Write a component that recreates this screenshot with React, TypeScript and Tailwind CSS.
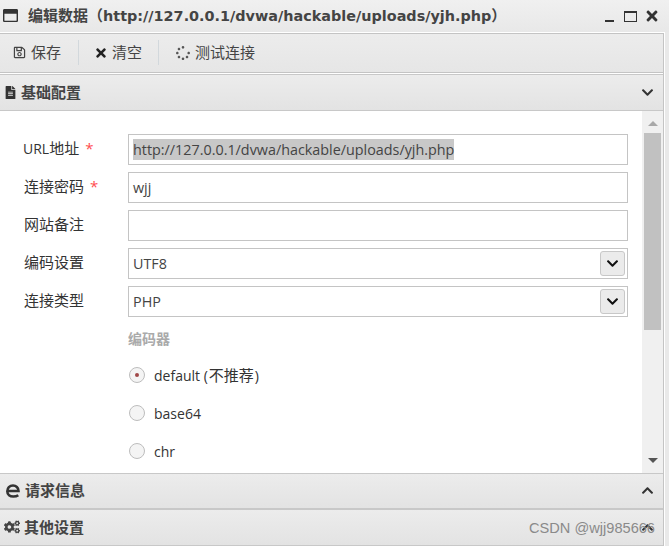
import { FaRegSave, FaTimes, FaSpinner, FaFileAlt, FaChevronDown, FaChevronUp, FaCogs, FaRegWindowMaximize } from "react-icons/fa";

const font = "font-['Open_Sans','Noto_Sans_CJK_SC',sans-serif]";

function Field({ label, required, children }: { label: React.ReactNode; required?: boolean; children: React.ReactNode }) {
  return (
    <div className="flex h-[31px]">
      <div className="w-[128px] pt-[3px] pl-6 text-[15px] leading-[22px] text-[#333]">
        {label}
        {required && <span className="ml-[6px] text-[#ff4d4f]">*</span>}
      </div>
      <div className="relative flex h-[31px] w-[500px] items-center border border-[#c4c4c4] bg-white pl-1 text-[14.35px] text-[#444]">
        {children}
      </div>
    </div>
  );
}

function SelectField({ label, value }: { label: string; value: string }) {
  return (
    <Field label={label}>
      {value}
      <span className="absolute top-[2px] right-[2px] flex h-[25px] w-[25px] items-center justify-center rounded-[3px] border border-[#c8c8c8] bg-[#ebebeb] text-[#111]">
        <FaChevronDown size={13} />
      </span>
    </Field>
  );
}

function Radio({ label, checked }: { label: React.ReactNode; checked?: boolean }) {
  return (
    <div className="flex h-[38px] items-center gap-[9px] pl-px text-[14px] text-[#333]">
      <span className="flex h-4 w-4 items-center justify-center rounded-full border border-[#bdbdbd] bg-[#f4f4f4]">
        {checked && <span className="h-1 w-1 rounded-full bg-[#a04848]" />}
      </span>
      <span>{label}</span>
    </div>
  );
}

function SectionBar({ icon, title, chevron }: { icon: React.ReactNode; title: string; chevron: React.ReactNode }) {
  return (
    <div className="flex h-full items-center justify-between bg-gradient-to-b from-[#ececec] to-[#e3e3e3] pr-[9px] pb-px pl-1 text-[15px] font-bold text-[#444]">
      <div className="flex items-center gap-1">
        {icon}
        {title}
      </div>
      <span className="text-[#333]">{chevron}</span>
    </div>
  );
}

function EdgeIcon() {
  return (
    <svg width="16" height="16" viewBox="0 0 16 16" fill="none" stroke="#333" strokeWidth="2.6" className="ml-px">
      <path d="M3 8h10.5C13.5 4.5 11 2.5 8 2.5 4.6 2.5 2.3 5 2.3 8.2c0 3.400 2.700 5.300 6 5.300 2 0 3.700-.4 5-1.300" />
    </svg>
  );
}

export default function App() {
  return (
    <div className={`relative flex h-[546px] w-[669px] flex-col overflow-hidden bg-[#e9e9e9] ${font}`}>
      {/* window title */}
      <div className="flex h-8 shrink-0 items-center justify-between bg-gradient-to-b from-[#f0f0f0] to-[#e8e8e8] pr-[9px] pl-[3px]">
        <div className="flex items-center gap-[10px] text-[15px] font-bold text-[#444]">
          <FaRegWindowMaximize size={15} className="text-[#333]" />
          <span>
            编辑数据（<span className="font-['DejaVu_Sans',sans-serif] text-[14.4px]">http://127.0.0.1/dvwa/hackable/uploads/yjh.php</span>）
          </span>
        </div>
        <div className="flex items-center text-[#333]">
          <span className="mt-[9px] mr-[10px] h-[2px] w-[9px] bg-[#333]" />
          <span className="mr-[7px] h-[11px] w-[13px] border border-t-[2px] border-[#333]" />
          <FaTimes size={16} />
        </div>
      </div>

      {/* panel */}
      <div className="h-[514px] w-[665px] border-t border-r border-white bg-white">
        <div className="flex h-full flex-col border-r border-[#c4c4c4]">
          <div className="flex h-[40px] shrink-0 items-center border-y border-[#c4c4c4] bg-gradient-to-b from-[#ececec] to-[#e6e6e6] pb-px text-[15px] text-[#444]">
            <button className="flex w-[78px] items-center gap-[5px] pl-[13px]">
              <FaRegSave size={13} />
              保存
            </button>
            <span className="h-[25px] w-px bg-[#d2d8dc]" />
            <button className="flex w-[79px] items-center gap-[4px] pl-[15px]">
              <FaTimes size={14} className="text-[#222]" />
              清空
            </button>
            <span className="h-[25px] w-px bg-[#d2d8dc]" />
            <button className="flex items-center gap-[5px] pl-[17px]">
              <FaSpinner size={14} className="text-[#555]" />
              测试连接
            </button>
          </div>

          <div className="mt-px h-[37px] shrink-0 border-y border-[#c8c8c8]">
            <SectionBar icon={<FaFileAlt size={13} className="text-[#333]" />} title="基础配置" chevron={<FaChevronDown size={13} />} />
          </div>

          {/* form */}
          <div className="flex min-h-0 flex-1 bg-white">
            <div className="min-w-0 flex-1 overflow-hidden">
              <div className="flex flex-col gap-[7px] pt-[23px]">
                <Field
                  label={
                    <span className="-ml-px">
                      <span className="text-[14px]">URL</span>地址
                    </span>
                  }
                  required
                >
                  <span className="bg-[#c8c8c8]">http://127.0.0.1/dvwa/hackable/uploads/yjh.php</span>
                </Field>
                <Field label="连接密码" required>
                  wjj
                </Field>
                <Field label="网站备注">{""}</Field>
                <SelectField label="编码设置" value="UTF8" />
                <SelectField label="连接类型" value="PHP" />
              </div>
              <div className="pt-[12px] pl-[128px]">
                <div className="mb-[7px] text-[14px] leading-5 font-bold text-[#aaa]">编码器</div>
                <Radio
                  label={
                    <>
                      default (<span className="px-px text-[15px]">不推荐</span>)
                    </>
                  }
                  checked
                />
                <Radio label="base64" />
                <Radio label="chr" />
              </div>
            </div>
            {/* scrollbar */}
            <div className="flex w-[21px] shrink-0 flex-col items-center bg-[#f0f0f0]">
              <span className="mt-[10px] h-0 w-0 border-x-[5px] border-b-[5px] border-x-transparent border-b-[#a8a8a8]" />
              <span className="mt-[7px] h-[197px] w-[17px] bg-[#c1c1c1]" />
              <span className="mt-[128px] h-0 w-0 border-x-[5px] border-t-[5px] border-x-transparent border-t-[#555]" />
            </div>
          </div>

          <div className="h-[35px] shrink-0 border-t border-[#c8c8c8]">
            <SectionBar icon={<EdgeIcon />} title="请求信息" chevron={<FaChevronUp size={13} />} />
          </div>
          <div className="h-[38px] shrink-0 border-t-2 border-b border-[#c8c8c8]">
            <SectionBar icon={<FaCogs size={16} className="text-[#444]" />} title="其他设置" chevron={<FaChevronUp size={13} />} />
          </div>
        </div>
      </div>

      {/* watermark */}
      <div className="absolute right-[14px] bottom-[6px] font-['Liberation_Sans',sans-serif] text-[14.6px] text-[#8a8a8a]">CSDN @wjj985666</div>
    </div>
  );
}
